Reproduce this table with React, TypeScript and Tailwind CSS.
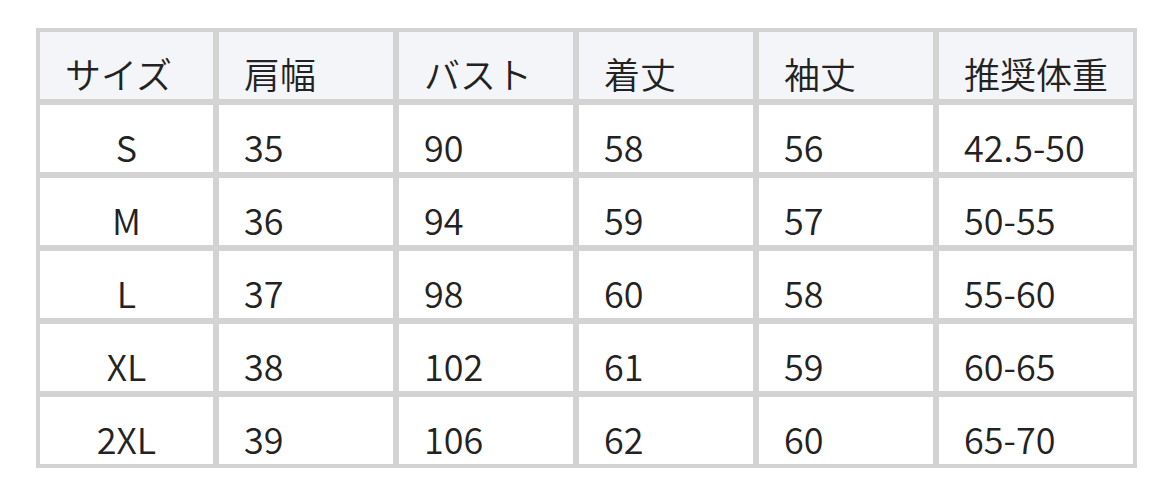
import React from "react";

const headers = ["サイズ", "肩幅", "バスト", "着丈", "袖丈", "推奨体重"];

const rows = [
  ["S", "35", "90", "58", "56", "42.5-50"],
  ["M", "36", "94", "59", "57", "50-55"],
  ["L", "37", "98", "60", "58", "55-60"],
  ["XL", "38", "102", "61", "59", "60-65"],
  ["2XL", "39", "106", "62", "60", "65-70"],
];

const App = () => {
  return (
    <div
      className="min-h-[495px] w-[1172px] bg-white pl-[36px] pt-[28px] text-[36px] font-[350] text-[#222]"
      style={{ fontFamily: '"Noto Sans CJK JP", "Noto Sans", sans-serif' }}
    >
      <div className="grid w-[1101px] grid-cols-[173px_174px_174px_174px_174px_1fr] gap-[6px] bg-[#d3d3d3] p-[4px]">
        {headers.map((h) => (
          <div
            key={h}
            className="h-[67px] bg-[#f4f5f9] pl-[25px] pt-[16px] leading-[51px] whitespace-nowrap"
          >
            {h}
          </div>
        ))}
        {rows.map((row) =>
          row.map((cell, i) => (
            <div
              key={row[0] + i}
              className={
                i === 0
                  ? "h-[67px] bg-white pt-[16px] text-center leading-[51px]"
                  : "h-[67px] bg-white pl-[25px] pt-[16px] leading-[51px] whitespace-nowrap"
              }
            >
              {cell}
            </div>
          ))
        )}
      </div>
    </div>
  );
};

export default App;
